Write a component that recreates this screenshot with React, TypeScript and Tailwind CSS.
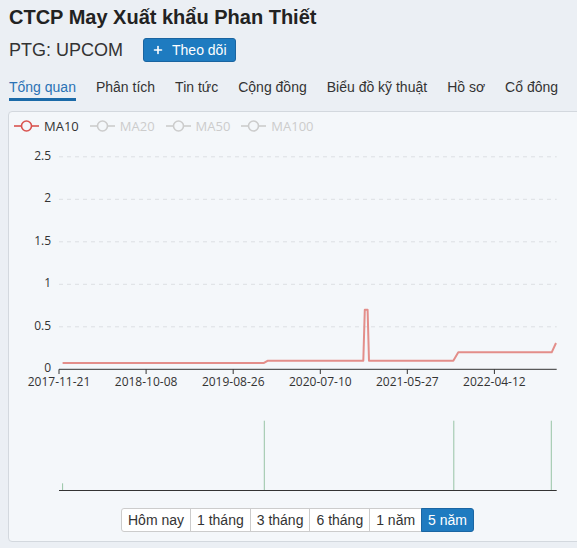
import { Plus } from 'lucide-react'

const tabs = ['Tổng quan', 'Phân tích', 'Tin tức', 'Cộng đồng', 'Biểu đồ kỹ thuật', 'Hồ sơ', 'Cổ đông']
const ranges = ['Hôm nay', '1 tháng', '3 tháng', '6 tháng', '1 năm', '5 năm']
const legend = [
  { name: 'MA10', active: true },
  { name: 'MA20', active: false },
  { name: 'MA50', active: false },
  { name: 'MA100', active: false },
]

// chart geometry (svg coords)
const X0 = 50
const X1 = 547.7
const yOf = (v: number) => 235.3 - v * 85
const yTicks = [0, 0.5, 1, 1.5, 2, 2.5]
const xTicks = [
  { x: 50, label: '2017-11-21' },
  { x: 137.1, label: '2018-10-08' },
  { x: 224.2, label: '2019-08-26' },
  { x: 311.3, label: '2020-07-10' },
  { x: 398.3, label: '2021-05-27' },
  { x: 485.4, label: '2022-04-12' },
]
const ma10: [number, number][] = [
  [53.6, 0.075],
  [255, 0.075],
  [258.5, 0.1],
  [354.3, 0.1],
  [355.8, 0.7],
  [358.6, 0.7],
  [360, 0.1],
  [444.3, 0.1],
  [449.3, 0.2],
  [542.7, 0.2],
  [547, 0.31],
]
const volumes = [
  { x: 53.6, top: 349.3 },
  { x: 255.3, top: 286.7 },
  { x: 444.8, top: 286.7 },
  { x: 542.3, top: 286.7 },
]

function LegendIcon({ active }: { active: boolean }) {
  const c = active ? '#d9534f' : '#cccccc'
  return (
    <svg width="25" height="14" viewBox="0 0 25 14">
      <line x1="0" y1="7" x2="25" y2="7" stroke={c} strokeWidth="1.6" />
      <circle cx="12.5" cy="7" r="5" fill="#f4f7fa" stroke={c} strokeWidth="1.6" />
    </svg>
  )
}

export default function App() {
  const path = ma10.map(([x, v], i) => `${i ? 'L' : 'M'}${x} ${yOf(v).toFixed(1)}`).join(' ')

  return (
    <div className="min-h-[548px] w-[577px] overflow-hidden bg-[#ebeff4] font-['Liberation_Sans',Arial,sans-serif] text-[#333]">
      <h1 className="pl-[9px] pt-[3px] text-[20px] leading-[28px] font-bold text-[#222]">
        CTCP May Xuất khẩu Phan Thiết
      </h1>

      <div className="mt-[7px] flex h-[24px] items-center pl-[9px]">
        <span className="text-[18px] leading-[24px] text-[#333]">PTG: UPCOM</span>
        <button className="ml-[20px] flex h-[24px] items-center gap-[8px] rounded-[3px] border border-[#1a64a0] bg-[#1e7bc0] px-[8px] text-[14px] leading-[20px] text-white">
          <Plus className="h-[12px] w-[12px]" strokeWidth={3.2} />
          Theo dõi
        </button>
      </div>

      <nav className="mt-[15px] flex gap-[20px] pl-[9px] text-[14px] leading-[20px]">
        {tabs.map((t, i) => (
          <span
            key={t}
            className={
              i === 0
                ? 'border-b-[3px] border-[#1b6aa8] pb-[1px] text-[#2a72b5]'
                : 'border-b-[3px] border-transparent pb-[1px] text-[#333]'
            }
          >
            {t}
          </span>
        ))}
      </nav>

      <div className="ml-[8px] mt-[10px] w-[579px] rounded-[4px] border border-[#d3d8de] bg-[#f4f7fa] pb-[9px]">
        <div className="mt-[6px] flex h-[16px] items-center gap-[11px] pl-[5px] font-['Open_Sans',sans-serif] text-[13px] leading-[16px]">
          {legend.map((l) => (
            <div key={l.name} className="flex items-center gap-[5px]">
              <LegendIcon active={l.active} />
              <span className={l.active ? 'text-[#333]' : 'text-[#cccccc]'}>{l.name}</span>
            </div>
          ))}
        </div>

        <svg width="577" height="366" viewBox="0 0 577 366" className="block font-['Open_Sans',sans-serif]">
          {yTicks.map((v) => (
            <g key={v}>
              {v > 0 && (
                <line
                  x1={X0}
                  x2={X1}
                  y1={yOf(v)}
                  y2={yOf(v)}
                  stroke="#dcdfe3"
                  strokeWidth="1"
                  strokeDasharray="4 4"
                />
              )}
              <text x="42" y={yOf(v) + 3} textAnchor="end" fontSize="12" fill="#333">
                {v}
              </text>
            </g>
          ))}

          <path d={path} fill="none" stroke="#e38e8a" strokeWidth="2" strokeLinejoin="round" />

          <line x1={X0} x2={X1} y1={235.3} y2={235.3} stroke="#333" strokeWidth="1" />
          {xTicks.map((t) => (
            <g key={t.label}>
              <line x1={t.x} x2={t.x} y1={235.3} y2={240} stroke="#333" strokeWidth="1" />
              <text x={t.x} y="252" textAnchor="middle" fontSize="12" fill="#333">
                {t.label}
              </text>
            </g>
          ))}

          {volumes.map((b) => (
            <line key={b.x} x1={b.x} x2={b.x} y1={b.top} y2={356} stroke="#98c4a5" strokeWidth="1" />
          ))}
          <line x1={X0} x2={X1} y1={356.5} y2={356.5} stroke="#333" strokeWidth="1.2" />
        </svg>

        <div className="mt-[8px] flex justify-center">
          <div className="flex h-[24px] text-[14px] leading-[22px]">
            {ranges.map((r, i) => {
              const active = i === ranges.length - 1
              return (
                <span
                  key={r}
                  className={`border px-[6px] ${i > 0 ? '-ml-px' : 'rounded-l-[3px]'} ${
                    active
                      ? 'rounded-r-[3px] border-[#1a66a3] bg-[#1f7bc0] text-white'
                      : 'border-[#cccccc] bg-white text-[#333]'
                  }`}
                >
                  {r}
                </span>
              )
            })}
          </div>
        </div>
      </div>
    </div>
  )
}
